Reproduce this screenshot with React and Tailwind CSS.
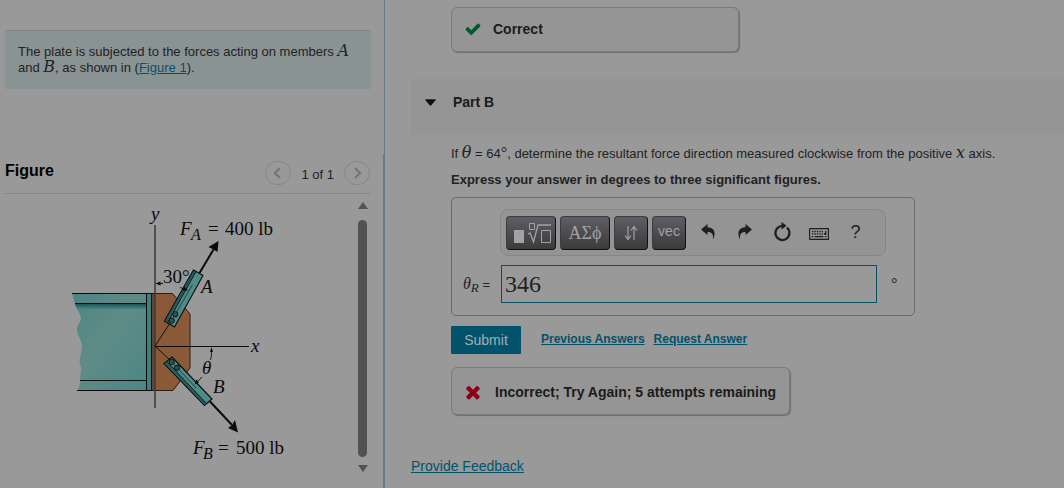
import React from 'react';

const App = () => {
  return (
    <div className="flex min-h-screen bg-[#999999] font-['Liberation_Sans',Arial,sans-serif] text-[13px] leading-4 text-[#222222]">
      <ProblemPane />
      <AnswerPane />
    </div>
  );
};

const MathVar = ({ children }) => (
  <i className="font-['DejaVu_Serif',serif] text-base leading-3">{children}</i>
);

/* Left side: statement and figure */
const ProblemPane = () => (
  <aside className="flex w-[385px] shrink-0 flex-col">
    <div className="h-[154px] border-r border-[#6b7989] pt-[30px] pl-[5px] pr-[13px]">
      <div className="border-t border-[#858585] bg-[#8a9393] px-[13px] pt-[13px] pb-[13px]">
        <p>
          The plate is subjected to the forces acting on members <MathVar>A</MathVar> and{' '}
          <MathVar>B</MathVar>, as shown in (
          <a href="#figure" className="text-[#02536a] underline">Figure 1</a>).
        </p>
      </div>
    </div>

    <div id="figure" className="flex-1 border-r-2 border-[#6b7989] pl-[5px] pr-[13px]">
      <div className="flex h-10 items-center justify-between border-b border-[#858585]">
        <h2 className="pb-[6px] text-base font-bold text-black">Figure</h2>
        <div className="flex items-center gap-[10px] pb-[2px]">
          <PagerButton label="Previous figure" d="M8 1 3 6l5 5" />
          <span className="pt-1">1 of 1</span>
          <PagerButton label="Next figure" d="m4 1 5 5-5 5" />
        </div>
      </div>
      <div className="flex justify-between">
        <PlateFigure />
        <div className="flex w-[15px] flex-col items-center pt-2 text-[#525252]">
          <svg width="10" height="8" viewBox="0 0 10 8"><path d="M5 0 10 7H0Z" fill="currentColor" /></svg>
          <div className="mt-[10px] mb-[7px] w-[9px] flex-1 rounded-full bg-[#525252]" />
          <svg className="mb-3" width="10" height="8" viewBox="0 0 10 8"><path d="M5 8 10 1H0Z" fill="currentColor" /></svg>
        </div>
      </div>
    </div>
  </aside>
);

const PagerButton = ({ label, d }) => (
  <button aria-label={label} className="flex h-6 w-[26px] items-center justify-center rounded-full border border-[#868686]">
    <svg width="12" height="12" viewBox="0 0 12 12" fill="none" stroke="#737373" strokeWidth="2">
      <path d={d} />
    </svg>
  </button>
);

const PlateFigure = () => (
  <svg
    width="345"
    height="290"
    viewBox="5 194 345 290"
    className="font-['Liberation_Serif','Times_New_Roman',serif] text-[19px]"
    fill="#0b0b0b"
  >
    <defs>
      <linearGradient id="web" x1="0" y1="0" x2="1" y2="1">
        <stop offset="0" stopColor="#4c8582" />
        <stop offset="0.45" stopColor="#5f8b88" />
        <stop offset="1" stopColor="#4a8784" />
      </linearGradient>
      <linearGradient id="shade" x1="0" y1="0" x2="0" y2="1">
        <stop offset="0" stopColor="#1f5556" />
        <stop offset="1" stopColor="#4c8582" />
      </linearGradient>
    </defs>

    {/* Beam */}
    <path d="M72 293h75v98H77c2-3 3-6 3-10l1-13c-1-4-2-6-1-10 1-5 2-8 2-13-1-6-5-10-5-16 0-4 4-7 4-12l-6-13c-1-4-2-7-3-11Z" fill="url(#web)" />
    <path d="M75 304h72v5H77Z" fill="url(#shade)" />
    <path d="M72 293.500h75M75 303.500h72M80 380.500h67M77 390.500h70" stroke="#0b0b0b" />
    <rect x="146.500" y="293.500" width="5" height="97" fill="#427f7c" stroke="#0b0b0b" />

    {/* Gusset plate */}
    <path d="M152 293.500h20.500L190 314v54l-17 22.500h-21Z" fill="#8a5a38" stroke="#2b1c12" />
    <path d="M152 294h3v96h-3Z" fill="#65442f" />
    <path d="M155 225v183" stroke="#3a3a3a" strokeWidth="1.500" />
    <path d="M155 346.500h94" stroke="#0b0b0b" strokeWidth="1.100" />
    <path d="m155 346 17-26M155 346l17 16" stroke="#17100b" />

    {/* Member A */}
    <path d="m193.500 270 9.500 5.500-28.500 51.500-10-6Z" fill="#4f8c89" stroke="#0b0b0b" strokeWidth="1.100" />
    <path d="m193.500 270 2.500 1.500-28.500 51.500-3-2Z" fill="#245c5c" stroke="#0b0b0b" strokeWidth="0.800" />
    <path d="m172 320 20.500-35.500" stroke="#163c3c" strokeWidth="0.900" />
    <Bolt x={171.7} y={320.7} />
    <Bolt x={175.3} y={314.3} />

    {/* Member B */}
    <path d="m172 357 40 42-7.500 6.500-40.500-42Z" fill="#4f8c89" stroke="#0b0b0b" strokeWidth="1.100" />
    <path d="m166.500 361 40 42.500-2 2-40.500-42Z" fill="#245c5c" stroke="#0b0b0b" strokeWidth="0.800" />
    <path d="m172 362 24.500 26.500" stroke="#163c3c" strokeWidth="0.900" />
    <Bolt x={171.7} y={362} />
    <Bolt x={177} y={367.7} />

    {/* Force arrows */}
    <path d="m199.500 273 14-23.500M210 401.500l22 23.500" stroke="#0b0b0b" strokeWidth="2" />
    <path d="m218.500 241-1 11-4-2.500-5-2.500ZM238 432.500l-10-4.500 4-3 3-5Z" />

    {/* Angle marks */}
    <path d="M157 283.500h6M180 287.500l6 2M211.500 349c0 5 0 8-1 11M202 377l-6 6" fill="none" stroke="#0b0b0b" strokeWidth="0.900" />
    <path d="m155.500 283.500 5-2v4ZM188 290.500l-5.500 0 1.500-4ZM211.500 347l1.500 5h-3ZM194.500 384.500l2-5 2.500 3Z" />

    <text x="151" y="220" fontStyle="italic">y</text>
    <text x="251" y="352" fontStyle="italic">x</text>
    <text x="163" y="283">30°</text>
    <text x="201" y="293" fontStyle="italic">A</text>
    <text x="213" y="393" fontStyle="italic">B</text>
    <text x="202" y="374" fontStyle="italic">θ</text>
    <text x="180" y="235" fontStyle="italic">F</text>
    <text x="191" y="240" fontSize="16" fontStyle="italic">A</text>
    <text x="208" y="235">=</text>
    <text x="225" y="235">400 lb</text>
    <text x="193" y="454" fontStyle="italic">F</text>
    <text x="203" y="459" fontSize="16" fontStyle="italic">B</text>
    <text x="218" y="454">=</text>
    <text x="236" y="454">500 lb</text>
  </svg>
);

const Bolt = ({ x, y }) => (
  <g stroke="#0b0b0b">
    <circle cx={x} cy={y} r="2.600" fill="#2f6361" />
    <circle cx={x} cy={y} r="0.800" fill="#7a9a98" strokeWidth="0.500" />
  </g>
);

/* Right side: question parts */
const AnswerPane = () => (
  <main className="min-w-0 flex-1 pt-[7px] pl-[26px]">
    <Feedback
      className="ml-10 h-[45px] w-[288px] gap-3 pb-[2px]"
      icon={<CheckIcon />}
      text="Correct"
    />

    <button className="mt-[27px] flex h-14 w-full items-center gap-[17px] bg-[#959595] pb-[10px] pl-[14px] text-sm font-bold text-[#1b1b1b]">
      <svg width="11" height="7" viewBox="0 0 10 6"><path d="M1 0h8q1 0 .6.900L5.700 5.500q-.7.700-1.400 0L.4.900Q0 0 1 0Z" fill="#111111" /></svg>
      Part B
    </button>

    <form className="ml-10 pt-[11px]" onSubmit={(e) => e.preventDefault()}>
      <p>
        If <MathVar>θ</MathVar> = 64<span className="font-['Liberation_Serif',serif] text-base leading-3">°</span>, determine the resultant force direction measured clockwise from the positive <MathVar>x</MathVar> axis.
      </p>
      <p className="mt-[10px] font-bold">Express your answer in degrees to three significant figures.</p>

      <div className="mt-[9px] w-[464px] rounded-[5px] border border-[#6a6a6a] pt-[11px] pb-3">
        <Toolbar />
        <div className="mt-[9px] flex items-center">
          <label htmlFor="theta-r" className="w-[49px] pl-[11px]">
            <i className="font-['Liberation_Serif','Times_New_Roman',serif] text-base">
              θ<sub className="text-[13px]">R</sub>
            </i>{' '}
            =
          </label>
          <input
            id="theta-r"
            defaultValue="346"
            className="h-[38px] w-[376px] border border-[#06505f] px-[3px] font-['Liberation_Serif','Times_New_Roman',serif] text-2xl text-[#222222] outline-none"
          />
          <span className="ml-[14px] font-['Liberation_Serif','Times_New_Roman',serif] text-base">°</span>
        </div>
      </div>

      <div className="mt-[10px] flex h-7 items-center">
        <button className="h-7 w-[70px] rounded-[1px] bg-[#00536a] text-sm text-[#a3b0b4]">Submit</button>
        <a href="#previous" className="ml-5 pb-[2px] text-xs font-bold text-[#02536a] underline">Previous Answers</a>
        <a href="#request" className="ml-[9px] pb-[2px] text-xs font-bold text-[#02536a] underline">Request Answer</a>
      </div>

      <Feedback
        className="mt-[13px] h-12 w-[339px] gap-[14px] pt-[2px]"
        icon={<CrossIcon />}
        text="Incorrect; Try Again; 5 attempts remaining"
      />
    </form>

    <a href="#feedback" className="mt-[41px] inline-block text-sm text-[#02536a] underline">Provide Feedback</a>
  </main>
);

const Feedback = ({ className, icon, text }) => (
  <div className={`flex items-center rounded-md border border-[#7b7b7b] bg-[#959595] pl-[13px] text-sm font-bold text-[#1b1b1b] shadow-[1px_1px_1px_#6f6f6f] ${className}`}>
    {icon}
    {text}
  </div>
);

const CheckIcon = () => (
  <svg width="16" height="16" viewBox="64 64 1664 1664" fill="#005a28">
    <path d="M1671 566q0 40-28 68l-724 724-136 136q-28 28-68 28t-68-28l-136-136-362-362q-28-28-28-68t28-68l136-136q28-28 68-28t68 28l294 295 656-657q28-28 68-28t68 28l136 136q28 28 28 68z" />
  </svg>
);

const CrossIcon = () => (
  <svg width="16" height="16" viewBox="192 192 1408 1408" fill="#8c0016">
    <path d="M1490 1322q0 40-28 68l-136 136q-28 28-68 28t-68-28l-294-294-294 294q-28 28-68 28t-68-28l-136-136q-28-28-28-68t28-68l294-294-294-294q-28-28-28-68t28-68l136-136q28-28 68-28t68 28l294 294 294-294q28-28 68-28t68 28l136 136q28 28 28 68t-28 68l-294 294 294 294q28 28 28 68z" />
  </svg>
);

const Toolbar = () => (
  <div className="ml-12 flex h-[47px] w-[386px] items-center gap-1 rounded-lg border border-[#868686] bg-[#949494] pl-[5px]">
    <KeyButton label="Templates" className="w-[50px]">
      <svg width="40" height="24" viewBox="0 0 40 24" fill="none" stroke="#a2a2a2">
        <path d="M3 9h10v13H3Z" fill="#a2a2a2" stroke="none" />
        <path d="M18.500 2.500h5v6h-5ZM30.500 9.500h9v12h-9Z" />
        <path d="M17 13l2-1 3.500 9 4.500-17h13" strokeWidth="1.300" />
      </svg>
    </KeyButton>
    <KeyButton label="Greek symbols" className="w-[50px] font-['Liberation_Serif','Times_New_Roman',serif] text-lg">
      ΑΣϕ
    </KeyButton>
    <KeyButton label="Arrows" className="w-[34px]">
      <svg width="14" height="16" viewBox="0 0 14 16" fill="none" stroke="#a2a2a2" strokeWidth="1.200">
        <path d="M4 1v13M1 10.500l3 4 3-4M10 15V2M7 5.500l3-4 3 4" />
      </svg>
    </KeyButton>
    <KeyButton label="Vector" className="w-[34px] pb-1 text-sm">vec</KeyButton>

    <div className="-ml-px flex">
      <IconButton label="Undo">
        <svg width="14" height="15" viewBox="0 0 14 15" fill="#1e1e1e">
          <path d="M0 5.500 6.500 0v3.200c5.500.2 9 4 6 11.300-.1.400-.7.300-.6-.1.600-4-1-6.400-5.400-6.400v3Z" />
        </svg>
      </IconButton>
      <IconButton label="Redo">
        <svg width="14" height="15" viewBox="0 0 14 15" fill="#1e1e1e">
          <path d="M14 5.500 7.500 0v3.200c-5.500.2-9 4-6 11.300.1.400.7.300.6-.1-.6-4 1-6.400 5.400-6.400v3Z" />
        </svg>
      </IconButton>
      <IconButton label="Reset">
        <svg width="18" height="20" viewBox="0 0 18 20" fill="none">
          <path d="M14 5.700A7 7 0 1 1 9 4" stroke="#1e1e1e" strokeWidth="2.200" />
          <path d="m8.500 0 5 3.800-5 3.800Z" fill="#1e1e1e" />
        </svg>
      </IconButton>
      <IconButton label="Keyboard shortcuts">
        <svg className="mt-1" width="20" height="12" viewBox="0 0 20 12" fill="none" stroke="#1e1e1e">
          <rect x="0.500" y="0.500" width="19" height="11" rx="0.800" strokeWidth="1.300" />
          <path d="M3 3.500h12M3 6h12" strokeWidth="1.400" strokeDasharray="1.300 1.100" />
          <path d="M5.500 8.700h9M2.500 8.700h1.700M15.800 8.700h1.700M16.700 3v4M15 6h2" strokeWidth="1.300" />
        </svg>
      </IconButton>
      <IconButton label="Help">?</IconButton>
    </div>
  </div>
);

const KeyButton = ({ label, className, children }) => (
  <button
    type="button"
    aria-label={label}
    className={`flex h-[34px] shrink-0 items-center justify-center rounded border border-t-[#3c3c3c] border-r-[#111111] border-b-[#111111] border-l-[#3c3c3c] bg-linear-to-b from-[#5e5e66] to-[#3b3b3b] text-[#a2a2a2] ${className}`}
  >
    {children}
  </button>
);

const IconButton = ({ label, children }) => (
  <button type="button" aria-label={label} className="flex h-[34px] w-[37px] items-center justify-center pb-[2px] text-lg text-[#1e1e1e]">
    {children}
  </button>
);

export default App;
